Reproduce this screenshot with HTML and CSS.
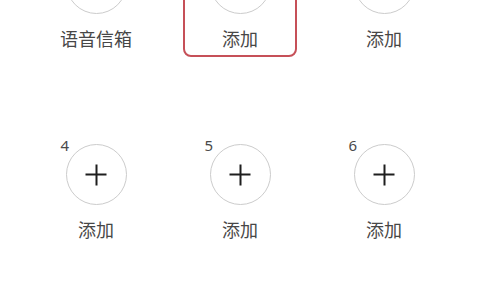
FILE: index.html
```html
<!DOCTYPE html>
<html lang="zh">
<head>
<meta charset="utf-8">
<link rel="stylesheet" href="styles.css">
</head>
<body>
<div class="grid">
  <div class="cell">
    <div class="circle"></div>
    <div class="label">语音信箱</div>
  </div>
  <div class="cell selected">
    <div class="circle"></div>
    <div class="label">添加</div>
  </div>
  <div class="cell">
    <div class="circle"></div>
    <div class="label">添加</div>
  </div>
  <div class="cell">
    <div class="circle"><span class="num">4</span><span class="plus"></span></div>
    <div class="label">添加</div>
  </div>
  <div class="cell">
    <div class="circle"><span class="num">5</span><span class="plus"></span></div>
    <div class="label">添加</div>
  </div>
  <div class="cell">
    <div class="circle"><span class="num">6</span><span class="plus"></span></div>
    <div class="label">添加</div>
  </div>
</div>
</body>
</html>
```
FILE: styles.css
```css
html, body {
  margin: 0;
  padding: 0;
  background: #ffffff;
  width: 480px;
  height: 300px;
  overflow: hidden;
}
body {
  font-family: "Noto Sans CJK SC", "Noto Sans", sans-serif;
  color: #474747;
}
.grid {
  display: grid;
  grid-template-columns: repeat(3, 144px);
  padding: 0 24px;
  margin-top: -53px;
  row-gap: 81px;
}
.cell {
  justify-self: center;
  width: 114px;
  box-sizing: border-box;
  border: 2px solid transparent;
  border-radius: 8px;
  padding: 4px 0 5px;
  display: flex;
  flex-direction: column;
  align-items: center;
  gap: 12px;
}
.cell.selected {
  border-color: #c65058;
}
.circle {
  position: relative;
  width: 61px;
  height: 61px;
  box-sizing: border-box;
  border: 1.5px solid #cccccc;
  border-radius: 50%;
}
.label {
  font-size: 18px;
  line-height: 24px;
  height: 24px;
}
.num {
  position: absolute;
  left: -6px;
  top: -7px;
  font-family: "Noto Sans", sans-serif;
  font-size: 15px;
  line-height: 14px;
  color: #4a4a4a;
}
.plus {
  position: absolute;
  left: 50%;
  top: 50%;
  width: 21px;
  height: 21px;
  transform: translate(-50%, -50%);
}
.plus::before, .plus::after {
  content: "";
  position: absolute;
  background: #1e1e1e;
}
.plus::before {
  left: 0;
  right: 0;
  top: 9.5px;
  height: 2px;
}
.plus::after {
  top: 0;
  bottom: 0;
  left: 9.5px;
  width: 2px;
}
```
